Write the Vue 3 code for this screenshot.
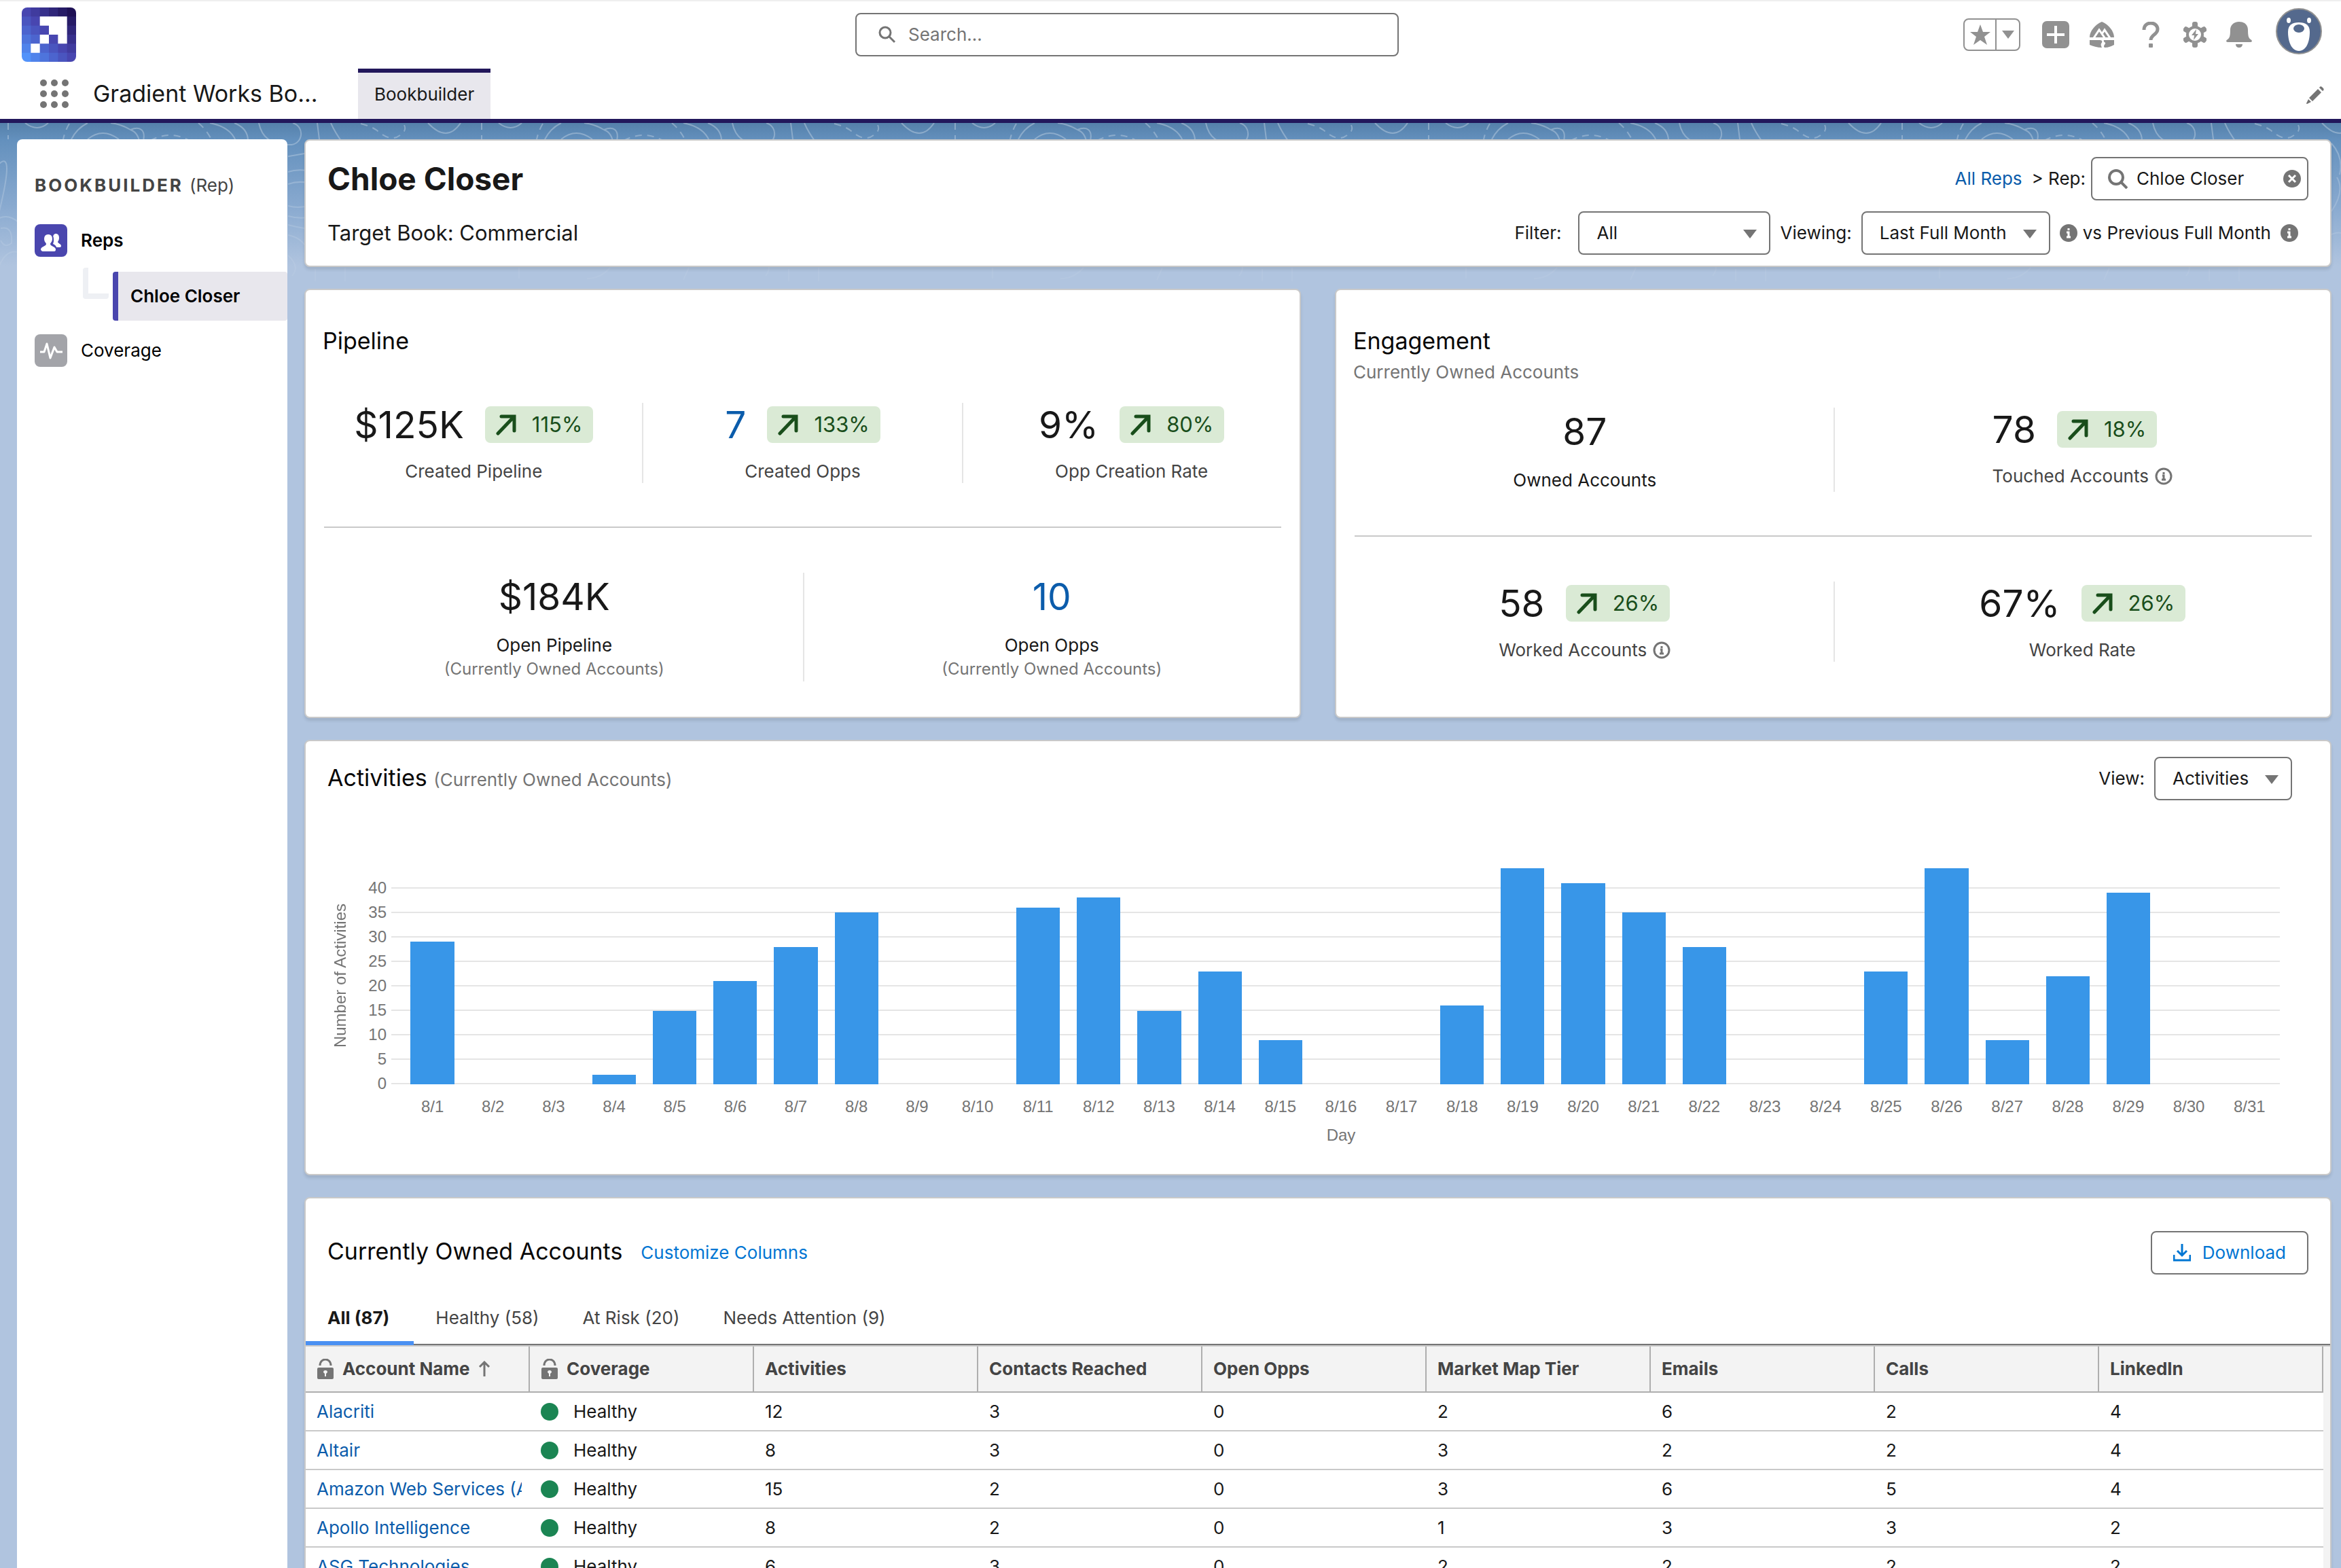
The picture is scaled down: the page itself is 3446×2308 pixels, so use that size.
<script setup>
import { ref } from "vue"

const search = ref("")
const rep = ref("Chloe Closer")
const filter = ref("All")
const period = ref("Last Full Month")
const view = ref("Activities")
const activeTab = ref(0)

// logo squares, light bottom left to dark top right
const mix = (a, b, t) => a.map((v, i) => Math.round(v + (b[i] - v) * t))
const logoCells = []
for (let row = 0; row < 6; row++) {
  for (let col = 0; col < 6; col++) {
    const t = (col + 5 - row) / 10
    const rgb = t < 0.5
      ? mix([82, 146, 250], [72, 70, 176], t * 2)
      : mix([72, 70, 176], [30, 16, 84], t * 2 - 1)
    logoCells.push({ x: col * 13, y: row * 13, fill: `rgb(${rgb.join(",")})` })
  }
}

const pipelineTop = [
  { value: "$125K", change: "115%", label: "Created Pipeline" },
  { value: "7", change: "133%", label: "Created Opps", link: true },
  { value: "9%", change: "80%", label: "Opp Creation Rate" },
]
const pipelineBottom = [
  { value: "$184K", label: "Open Pipeline", note: "(Currently Owned Accounts)" },
  { value: "10", label: "Open Opps", note: "(Currently Owned Accounts)", link: true },
]
const engagementTop = [
  { value: "87", label: "Owned Accounts" },
  { value: "78", change: "18%", label: "Touched Accounts", info: true },
]
const engagementBottom = [
  { value: "58", change: "26%", label: "Worked Accounts", info: true },
  { value: "67%", change: "26%", label: "Worked Rate" },
]

const cards = [
  { title: "Pipeline", rows: [pipelineTop, pipelineBottom] },
  { title: "Engagement", sub: "Currently Owned Accounts", rows: [engagementTop, engagementBottom] },
]

const ticks = [40, 35, 30, 25, 20, 15, 10, 5, 0]
const maxValue = 44
const activities = [
  29, 0, 0, 2, 15, 21, 28, 35, 0, 0, 36, 38, 15, 23, 9, 0,
  0, 16, 44, 41, 35, 28, 0, 0, 23, 44, 9, 22, 39, 0, 0,
]

const tabs = ["All (87)", "Healthy (58)", "At Risk (20)", "Needs Attention (9)"]
const columns = ["Activities", "Contacts Reached", "Open Opps", "Market Map Tier", "Emails", "Calls", "LinkedIn"]
const accounts = [
  { name: "Alacriti", coverage: "Healthy", values: [12, 3, 0, 2, 6, 2, 4] },
  { name: "Altair", coverage: "Healthy", values: [8, 3, 0, 3, 2, 2, 4] },
  { name: "Amazon Web Services (AWS)", coverage: "Healthy", values: [15, 2, 0, 3, 6, 5, 4] },
  { name: "Apollo Intelligence", coverage: "Healthy", values: [8, 2, 0, 1, 3, 3, 2] },
  { name: "ASG Technologies", coverage: "Healthy", values: [6, 3, 0, 2, 2, 2, 2] },
]
</script>

<template>
  <div class="app">
    <header class="global">
      <div class="global-top">
        <svg class="logo" viewBox="0 0 78 78">
          <rect v-for="c in logoCells" :key="c.x + '-' + c.y" :x="c.x" :y="c.y" width="14" height="14" :fill="c.fill" />
          <path d="M26 13h39v39H52V39H39V26H26zM26 39h13v13H26zM13 52h13v13H13z" fill="#fff" />
        </svg>
        <label class="search">
          <svg viewBox="0 0 26 26"><circle cx="10" cy="10" r="8" /><path d="M16 16l8 8" /></svg>
          <input v-model="search" type="text" placeholder="Search..." aria-label="Search" />
        </label>
        <div class="actions">
          <div class="favorites">
            <button aria-label="Favorites">
              <svg width="30" height="30" viewBox="0 0 30 30"><path d="M15 0l4 11h11l-9 7 4 12-10-7-10 7 4-12-9-7h11z" /></svg>
            </button>
            <button class="drop" aria-label="Favorites list">
              <svg width="18" height="12" viewBox="0 0 18 12"><path d="M0 0h18L9 12z" /></svg>
            </button>
          </div>
          <button aria-label="Create">
            <svg width="40" height="40" viewBox="0 0 40 40">
              <rect width="40" height="40" rx="7" />
              <path d="M20 7v26M7 20h26" stroke="#fff" stroke-width="4" />
            </svg>
          </button>
          <button class="wide" aria-label="Guidance">
            <svg width="38" height="38" viewBox="0 0 38 38">
              <path d="M19 0C29 4 37 14 37 23H1C1 14 9 4 19 0zM1 27h15c4 0 4 3 2 5-1 2 0 4 1 6C12 38 6 36 1 34zM22 27h15v7c-4 2-8 4-14 4-3-3 2-5 1-7-1-1-3-2-2-4z" />
              <path d="M7 24l8-12 9 13M19 18l4-6 8 12" fill="none" stroke="#fff" stroke-width="3" />
            </svg>
          </button>
          <button class="wide" aria-label="Help">
            <svg width="26" height="38" viewBox="0 0 26 38">
              <path d="M3 12c0-6 4-10 10-10s10 4 10 9c0 8-10 8-10 16" fill="none" stroke="#919191" stroke-width="5" />
              <rect x="10" y="32" width="6" height="6" rx="1" />
            </svg>
          </button>
          <button aria-label="Setup">
            <svg width="34" height="38" viewBox="0 0 34 38">
              <g transform="translate(17 19)">
                <rect v-for="a in [0, 60, 120]" :key="a" x="-4" y="-19" width="8" height="38" rx="3" :transform="`rotate(${a})`" />
                <circle r="13" />
                <circle r="9" fill="#fff" />
                <path d="M2-8l-7 9h4l-1 7 7-9H1z" />
              </g>
            </svg>
          </button>
          <button class="wide" aria-label="Notifications">
            <svg width="38" height="38" viewBox="0 0 38 38">
              <path d="M19 0c8 0 13 5 13 12 0 9 1 12 4 14 3 2 2 4 0 4H2c-2 0-3-2 0-4 3-2 4-5 4-14C6 5 11 0 19 0zM14 33h10c0 3-2 5-5 5s-5-2-5-5z" />
            </svg>
          </button>
          <button class="avatar" aria-label="User menu">
            <svg viewBox="0 0 68 68">
              <circle cx="34" cy="34" r="33" fill="#54698d" stroke="#919191" stroke-width="2" />
              <path d="M34 21c10 0 16 4 16 14 0 14-5 28-16 28S18 49 18 35c0-10 6-14 16-14z" fill="#fff" />
              <ellipse cx="34" cy="30" rx="8" ry="6" fill="#54698d" />
              <ellipse cx="19" cy="18" rx="3" ry="4" fill="#fff" />
              <ellipse cx="49" cy="18" rx="3" ry="4" fill="#fff" />
            </svg>
          </button>
        </div>
      </div>
      <nav class="global-nav">
        <button class="launcher" aria-label="App Launcher">
          <i v-for="n in 9" :key="n"></i>
        </button>
        <span class="app-name">Gradient Works Bo...</span>
        <a href="#" class="nav-tab">Bookbuilder</a>
        <button class="edit" aria-label="Edit navigation">
          <svg width="26" height="26" viewBox="0 0 26 26"><path d="M17 4l5 5L9 22l-5-5zM19 2c1-2 3-2 4-1l2 2c1 1 1 3-1 4zM3 19l4 4-6 3c-1 0-1-1-1-1z" /></svg>
        </button>
      </nav>
    </header>

    <div class="stage">
      <svg class="contours" aria-hidden="true">
        <defs>
          <pattern id="contour" x="424" y="0" width="697" height="240" patternUnits="userSpaceOnUse">
            <path d="M7 0C26 6 22 34 0 32M43 0l3 24M63 0q6 14 18 30M206 0q28 30 48 0M310 0q18 14 34 0M378 24Q386 8 402 0M402 24q22-18 46 0M436 0q16 2 29 10c14-6 24 0 18 20M465 10q12 4 14 22M582 0q30 6 38 26M618 0q20 8 20 26M654 0c4 20 18 32 43 32M-4 50l34-6M0 72q12-4 28-2M0 90q14-5 30-2M0 122q14 4 30 0M0 137q14 4 30 2M0 150q14 4 30 6M0 165q20 4 28 20M0 195q18 16 6 30M272 60q22-20 0 70M272 140q14-6 28 6M274 155q18-4 16 22-10 8-16-4M272 210q10-24 28-20M220 30q18 20 12 46M220 130q20-30 8-50M218 165q16-8 22 2M40 215v18M84 213v20M340 213v16M474 213q-14 16-34 16M590 213l-8 18" />
            <path stroke-dasharray="10 8" d="M107 1q16 4 24 10 20 18 34 7 12-8 4-18M285 0v24M375 1q-6 10-9 23M494 26q30-16 58 0M565 0q12 10 19 24" />
          </pattern>
          <linearGradient id="fade" x2="0" y2="1">
            <stop offset="0" stop-color="#fff" stop-opacity=".3" />
            <stop offset="1" stop-color="#fff" stop-opacity=".04" />
          </linearGradient>
          <mask id="fade-mask"><rect width="100%" height="100%" fill="url(#fade)" /></mask>
        </defs>
        <rect width="100%" height="100%" fill="url(#contour)" mask="url(#fade-mask)" />
      </svg>

      <aside class="sidebar">
        <h2>BOOKBUILDER <span>(Rep)</span></h2>
        <a href="#" class="side-link strong">
          <svg class="tile reps" viewBox="0 0 48 48">
            <path d="M27 20c0-4 2-6 4-6 3 0 5 2 5 6 0 3-1 4-2 6 0 2 5 3 5 6 0 1-1 2-2 2h-5c-1-3-3-4-5-5 1-3 2-6 0-9z" />
            <path stroke="#4a46ae" stroke-width="2" d="M20 14c5 0 7 4 7 8s-1 5-3 7c0 3 8 3 8 8 0 2-1 4-3 4H12c-2 0-4-2-4-4 0-5 8-5 8-8-2-2-3-4-3-7 0-4 2-8 7-8z" />
          </svg>
          Reps
        </a>
        <div class="side-child">
          <i class="elbow"></i>
          <a href="#">Chloe Closer</a>
        </div>
        <a href="#" class="side-link">
          <svg class="tile coverage" viewBox="0 0 48 48"><path d="M8 26h6l4-12 5 21 6-16 4 7h8" /></svg>
          Coverage
        </a>
      </aside>

      <main>
        <section class="card page-head">
          <h1>Chloe Closer</h1>
          <div class="controls">
            <a href="#" class="all-reps">All Reps</a>
            <label for="rep">&gt; Rep:</label>
            <div class="rep-box">
              <svg width="29" height="29" viewBox="0 0 29 29"><circle cx="12" cy="12" r="10" /><path d="M19 19l9 9" /></svg>
              <input id="rep" v-model="rep" type="text" />
              <button aria-label="Clear" @click="rep = ''">
                <svg width="26" height="26" viewBox="0 0 26 26"><circle cx="13" cy="13" r="13" /><path d="M8 8l10 10M18 8L8 18" /></svg>
              </button>
            </div>
          </div>
          <p class="target">Target Book: Commercial</p>
          <div class="controls">
            <label for="filter">Filter:</label>
            <div class="select filter">
              <select id="filter" v-model="filter"><option>All</option></select>
            </div>
            <label for="period">Viewing:</label>
            <div class="select period">
              <select id="period" v-model="period"><option>Last Full Month</option></select>
            </div>
            <svg class="info" viewBox="0 0 26 26"><circle cx="13" cy="13" r="13" /><path d="M13 6v3M10 12h3v7M10 19h6" /></svg>
            <span class="versus">vs Previous Full Month</span>
            <svg class="info last" viewBox="0 0 26 26"><circle cx="13" cy="13" r="13" /><path d="M13 6v3M10 12h3v7M10 19h6" /></svg>
          </div>
        </section>

        <div class="metrics">
          <section v-for="card in cards" :key="card.title" class="card metric-card">
            <header>
              <h3>{{ card.title }}</h3>
              <p v-if="card.sub">{{ card.sub }}</p>
            </header>
            <template v-for="(row, r) in card.rows" :key="r">
              <hr v-if="r > 0" />
              <div class="stats" :class="{ three: row.length === 3 }">
                <div v-for="s in row" :key="s.label" class="stat" :class="{ plain: !s.change, lead: s.info }">
                  <div class="stat-body">
                    <div class="stat-value">
                      <a v-if="s.link" href="#">{{ s.value }}</a>
                      <span v-else>{{ s.value }}</span>
                      <span v-if="s.change" class="badge">
                        <svg width="30" height="32" viewBox="0 0 30 32"><path d="M3 29L26 5M8 4h19v21" /></svg>
                        {{ s.change }}
                      </span>
                    </div>
                    <div class="stat-label">
                      {{ s.label }}
                      <svg v-if="s.info" width="26" height="26" viewBox="0 0 26 26"><circle cx="13" cy="13" r="11" /><path d="M13 7v3M11 12h2v6M10 18h6" /></svg>
                    </div>
                    <div v-if="s.note" class="stat-note">{{ s.note }}</div>
                  </div>
                </div>
              </div>
            </template>
          </section>
        </div>

        <section class="card activity">
          <header>
            <h3>Activities <small>(Currently Owned Accounts)</small></h3>
            <div class="controls">
              <label for="view">View:</label>
              <div class="select view">
                <select id="view" v-model="view"><option>Activities</option></select>
              </div>
            </div>
          </header>
          <div class="chart">
            <div class="y-title">Number of Activities</div>
            <div class="plot">
              <div class="ticks">
                <div v-for="t in ticks" :key="t" class="tick">{{ t }}</div>
              </div>
              <div class="bars">
                <div v-for="(v, i) in activities" :key="i" class="slot">
                  <div class="bar" :style="{ height: (v / maxValue) * 100 + '%' }"></div>
                </div>
              </div>
            </div>
            <div class="days">
              <span v-for="(v, i) in activities" :key="i">8/{{ i + 1 }}</span>
            </div>
            <div class="x-title">Day</div>
          </div>
        </section>

        <section class="card accounts">
          <header>
            <h3>Currently Owned Accounts</h3>
            <a href="#">Customize Columns</a>
            <button class="download">
              <svg width="26" height="26" viewBox="0 0 26 26"><path d="M13 0v16M6 10l7 7 7-7M1 16v8h24v-8" /></svg>
              Download
            </button>
          </header>
          <div class="tabs" role="tablist">
            <button
              v-for="(tab, i) in tabs"
              :key="tab"
              role="tab"
              :class="{ active: i === activeTab }"
              @click="activeTab = i"
            >{{ tab }}</button>
          </div>
          <div class="table-wrap">
            <table>
              <thead>
                <tr>
                  <th v-for="c in ['Account Name', 'Coverage']" :key="c">
                    <div class="locked">
                      <svg width="26" height="30" viewBox="0 0 26 30"><path d="M5 10c0-12 16-12 16 0" /><path d="M3 13h20q2 0 2 2v13q0 2-2 2H3q-2 0-2-2V15q0-2 2-2zM13 17q-3 0-3 3l2 2v4h2v-4l2-2q0-3-3-3z" /></svg>
                      {{ c }}
                      <svg v-if="c === 'Account Name'" class="sort" width="18" height="24" viewBox="0 0 18 24"><path d="M9 23V3M2 9l7-7 7 7" /></svg>
                    </div>
                  </th>
                  <th v-for="c in columns" :key="c">{{ c }}</th>
                </tr>
              </thead>
              <tbody>
                <tr v-for="a in accounts" :key="a.name">
                  <td><a href="#">{{ a.name }}</a></td>
                  <td><span class="coverage-cell"><i></i>{{ a.coverage }}</span></td>
                  <td v-for="(v, i) in a.values" :key="i">{{ v }}</td>
                </tr>
              </tbody>
            </table>
          </div>
        </section>
      </main>
    </div>
  </div>
</template>

<style>
body {
  margin: 0;
  background: #b0c4df;
}
</style>

<style scoped>
* {
  box-sizing: border-box;
}
.app {
  height: 100vh;
  display: flex;
  flex-direction: column;
  overflow: hidden;
  font-family: Inter, "Liberation Sans", sans-serif;
  font-size: 26px;
  line-height: 36px;
  color: #181818;
}
h1, h2, h3, p {
  margin: 0;
  font-weight: 400;
}
a {
  color: #0b5cab;
  text-decoration: none;
}
button {
  padding: 0;
  border: 0;
  background: none;
  font: inherit;
  color: inherit;
}
input, select {
  font: inherit;
  color: inherit;
}
svg {
  display: block;
  flex: none;
}

/* GLOBAL HEADER */
.global {
  flex: none;
  background: #fff;
  border-bottom: 6px solid #22175b;
  box-shadow: inset 0 2px #efefef;
}
.global-top {
  display: grid;
  grid-template-columns: 1259fr 800fr 1387fr;
  align-items: center;
  height: 101px;
}
.logo {
  width: 80px;
  height: 80px;
  margin-left: 32px;
  border-radius: 8px;
}
.search {
  display: flex;
  align-items: center;
  gap: 18px;
  height: 64px;
  padding: 0 32px;
  border: 2px solid #747474;
  border-radius: 8px;
}
.search svg {
  width: 26px;
  height: 26px;
  fill: none;
  stroke: #747474;
  stroke-width: 3;
}
.search input, .rep-box input {
  flex: 1;
  min-width: 0;
  padding: 0;
  border: 0;
  outline: 0;
  background: none;
}
.search input::placeholder {
  color: #747474;
}
.actions {
  display: flex;
  justify-content: flex-end;
  align-items: center;
  gap: 24px;
  padding-right: 28px;
  fill: #919191;
}
.actions button {
  display: flex;
  justify-content: center;
}
.actions .wide {
  width: 48px;
}
.favorites {
  display: flex;
  height: 48px;
  margin-right: 8px;
  border: 2px solid #919191;
  border-radius: 8px;
}
.favorites button {
  width: 45px;
  align-items: center;
}
.favorites .drop {
  width: 35px;
  border-left: 2px solid #919191;
}
.actions .avatar {
  width: 68px;
  margin: 0 0 10px 6px;
}
.global-nav {
  display: flex;
  align-items: center;
  height: 74px;
}
.launcher {
  display: grid;
  grid-template-columns: repeat(3, 10px);
  gap: 6px;
  margin-left: 59px;
}
.launcher i {
  width: 10px;
  height: 10px;
  border-radius: 50%;
  background: #747474;
}
.app-name {
  margin-left: 36px;
  width: 390px;
  font-size: 34px;
  white-space: nowrap;
}
.nav-tab {
  height: 74px;
  padding: 0 24px;
  border-top: 6px solid #22175b;
  background: #e8e7ed;
  color: #181818;
  line-height: 64px;
}
.edit {
  margin: 4px 25px 0 auto;
  fill: #747474;
}

/* STAGE */
.stage {
  position: relative;
  flex: 1;
  min-height: 0;
  display: flex;
  gap: 25px;
  padding: 24px 14px 0 25px;
  background: linear-gradient(#5580aa, #6390bd 24px, #88a9cf 120px, #b0c4df 210px);
}
.contours {
  position: absolute;
  inset: 0;
  width: 100%;
  height: 240px;
}
.contours path {
  fill: none;
  stroke: #fff;
  stroke-width: 2;
}

/* SIDEBAR */
.sidebar {
  position: relative;
  flex: none;
  width: 398px;
  padding: 50px 0 0 26px;
  background: #fff;
  border-radius: 8px 8px 0 0;
}
.sidebar h2 {
  margin-bottom: 39px;
  color: #444;
  font-size: 26px;
  font-weight: 700;
  letter-spacing: 3px;
}
.sidebar h2 span {
  font-weight: 400;
  letter-spacing: 0;
}
.side-link {
  display: flex;
  align-items: center;
  gap: 20px;
  color: #000;
}
.strong {
  font-weight: 600;
}
.tile {
  width: 48px;
  height: 48px;
  border-radius: 8px;
}
.reps {
  background: #4a46ae;
  fill: #fff;
}
.coverage {
  background: #a3a4a9;
  fill: none;
  stroke: #fff;
  stroke-width: 3;
  stroke-linejoin: round;
}
.side-child {
  display: flex;
  gap: 6px;
  margin: 16px 0 20px 71px;
}
.elbow {
  width: 38px;
  height: 46px;
  border: solid #eef0f4;
  border-width: 0 0 8px 8px;
  border-radius: 4px;
}
.side-child a {
  flex: 1;
  margin-top: 6px;
  padding-left: 18px;
  border-left: 8px solid #4a46ae;
  border-radius: 4px;
  background: #e8e7ed;
  color: #000;
  font-weight: 600;
  line-height: 72px;
}

/* CARDS */
main {
  position: relative;
  flex: 1;
  min-width: 0;
  display: flex;
  flex-direction: column;
  gap: 32px;
}
.card {
  flex: none;
  border: 2px solid #c9c9c9;
  border-radius: 8px;
  background: #fff;
  box-shadow: 0 4px 4px rgba(0, 0, 0, 0.1);
}
.card h3 {
  color: #080707;
  font-size: 34px;
  line-height: 44px;
}
.page-head {
  display: grid;
  grid-template-columns: auto 1fr;
  grid-auto-rows: 64px;
  align-items: center;
  row-gap: 16px;
  padding: 24px 32px 16px;
}
.page-head h1 {
  font-size: 46px;
  font-weight: 700;
  line-height: 64px;
}
.target {
  font-size: 31px;
}
.controls {
  display: flex;
  justify-content: flex-end;
  align-items: center;
}
.all-reps {
  margin-right: 14px;
}
.rep-box {
  display: flex;
  align-items: center;
  width: 320px;
  height: 64px;
  margin-left: 8px;
  padding: 0 9px 0 23px;
  border: 2px solid #747474;
  border-radius: 8px;
}
.rep-box svg {
  fill: none;
  stroke: #747474;
  stroke-width: 4;
}
.rep-box input {
  margin-left: 13px;
}
.rep-box button svg {
  fill: #747474;
  stroke: #fff;
  stroke-width: 3;
}
.rep-box button circle {
  stroke: none;
}
.select {
  position: relative;
  margin: 0 14px;
}
.select::after {
  content: "";
  position: absolute;
  right: 20px;
  top: 27px;
  border: solid transparent;
  border-width: 13px 10px 0;
  border-top-color: #747474;
  pointer-events: none;
}
.select select {
  appearance: none;
  width: 100%;
  height: 64px;
  padding: 0 25px;
  border: 2px solid #747474;
  border-radius: 8px;
  background: #fff;
}
.filter {
  width: 283px;
  margin-left: 25px;
}
.period {
  width: 278px;
}
.view {
  width: 203px;
  margin-right: 0;
}
.info {
  width: 26px;
  height: 26px;
  fill: #747474;
}
.info path {
  fill: none;
  stroke: #fff;
  stroke-width: 3;
}
.info.last {
  margin-right: 15px;
}
.versus {
  margin: 0 14px 0 8px;
}

/* METRICS */
.metrics {
  display: grid;
  grid-template-columns: 1fr 1fr;
  gap: 50px;
}
.metric-card {
  padding: 53px 0 52px;
}
.metric-card header {
  min-height: 79px;
  margin-bottom: 34px;
  padding-left: 25px;
}
.metric-card header p {
  margin-top: 6px;
  color: #747474;
}
.metric-card hr {
  height: 2px;
  margin: 64px 27px 66px;
  border: 0;
  background: #c9c9c9;
}
.stats {
  display: grid;
  grid-template-columns: 1fr 1fr;
}
.stats.three {
  grid-template-columns: 495fr 472fr 497fr;
}
.stat {
  display: flex;
  justify-content: center;
}
.stat + .stat {
  border-left: 2px solid #e5e5e5;
}
.stat-body {
  display: flex;
  flex-direction: column;
  align-items: center;
}
.lead .stat-body {
  align-items: flex-start;
}
.stat-value {
  display: flex;
  align-items: center;
  gap: 31px;
  height: 64px;
  margin-bottom: 20px;
  font-size: 55px;
}
.plain .stat-value {
  height: 70px;
}
.badge {
  display: flex;
  align-items: center;
  gap: 23px;
  height: 54px;
  padding: 0 16px;
  border-radius: 8px;
  background: #daead5;
  color: #194e1b;
  font-size: 31px;
}
.badge svg {
  fill: none;
  stroke: #194e1b;
  stroke-width: 5;
  stroke-linecap: round;
}
.stat-label {
  display: flex;
  align-items: center;
  gap: 9px;
  color: #444;
  line-height: 34px;
}
.plain .stat-label {
  color: #181818;
}
.stat-label svg {
  fill: none;
  stroke: #747474;
  stroke-width: 3;
}
.stat-note {
  color: #747474;
  font-size: 24px;
  line-height: 36px;
}

/* CHART */
.activity header {
  display: flex;
  justify-content: space-between;
  align-items: center;
  padding: 23px 56px 0 32px;
}
.activity small {
  color: #747474;
  font-size: 26px;
}
.chart {
  display: grid;
  grid-template-columns: 28px 1fr;
  margin: 111px 74px 43px 37px;
  color: #757575;
  font-family: "Liberation Sans", sans-serif;
  font-size: 24px;
  line-height: 28px;
}
.y-title {
  align-self: center;
  padding-top: 30px;
  writing-mode: vertical-rl;
  transform: rotate(180deg);
  white-space: nowrap;
}
.plot {
  display: grid;
}
.ticks, .bars {
  grid-area: 1 / 1;
}
.tick {
  display: flex;
  align-items: center;
  justify-content: flex-end;
  gap: 7px;
  height: 36px;
}
.tick::after {
  content: "";
  width: calc(100% - 61px);
  height: 2px;
  background: #e5e5e5;
}
/* the tallest bars rise above the top tick row */
.bars {
  display: flex;
  align-self: end;
  height: 318px;
  margin-top: -40px;
  margin-bottom: 17px;
  padding-left: 77px;
}
.slot {
  flex: 1;
  display: flex;
  justify-content: center;
  align-items: flex-end;
}
.bar {
  width: 72%;
  background: #3896e8;
}
.days {
  grid-column: 2;
  display: flex;
  padding: 2px 0 0 77px;
}
.days span {
  flex: 1;
  text-align: center;
}
.x-title {
  grid-column: 2;
  margin-top: 14px;
  padding-left: 77px;
  text-align: center;
}

/* ACCOUNTS */
.accounts header {
  display: flex;
  align-items: center;
  padding: 48px 32px 24px;
}
.accounts header h3 {
  margin-bottom: 4px;
}
.accounts header a {
  margin-left: 27px;
  color: #0176d3;
}
.download {
  display: flex;
  align-items: center;
  gap: 17px;
  height: 64px;
  margin-left: auto;
  padding: 0 31px;
  border: 2px solid #747474;
  border-radius: 8px;
  color: #0176d3;
}
.download svg {
  fill: none;
  stroke: #0176d3;
  stroke-width: 3;
}
.tabs {
  display: flex;
  box-shadow: inset 0 -2px #747474;
}
.tabs button {
  height: 80px;
  padding: 0 32px;
  color: #444;
}
.tabs .active {
  padding-right: 36px;
  box-shadow: inset 0 -6px #4a90f2;
  color: #181818;
  font-weight: 700;
}
.table-wrap {
  padding-right: 10px;
  border-top: 2px solid #c9c9c9;
  background: #f3f3f3;
}
table {
  width: 100%;
  table-layout: fixed;
  border-collapse: separate;
  border-spacing: 0;
}
th {
  height: 68px;
  padding: 0 16px;
  border-right: 2px solid #aeaeae;
  border-bottom: 2px solid #aeaeae;
  color: #444;
  font-weight: 700;
  text-align: left;
  white-space: nowrap;
}
.locked {
  display: flex;
  align-items: center;
  gap: 12px;
}
.locked svg {
  fill: #747474;
  fill-rule: evenodd;
}
.locked svg path:first-child {
  fill: none;
  stroke: #747474;
  stroke-width: 3;
}
td {
  height: 57px;
  padding: 0 12px 0 16px;
  border-bottom: 2px solid #c9c9c9;
  background: #fff;
}
td a {
  display: block;
  overflow: hidden;
  white-space: nowrap;
}
.coverage-cell {
  display: flex;
  align-items: center;
  gap: 22px;
}
.coverage-cell i {
  width: 26px;
  height: 26px;
  border-radius: 50%;
  background: #1b8553;
}
</style>
